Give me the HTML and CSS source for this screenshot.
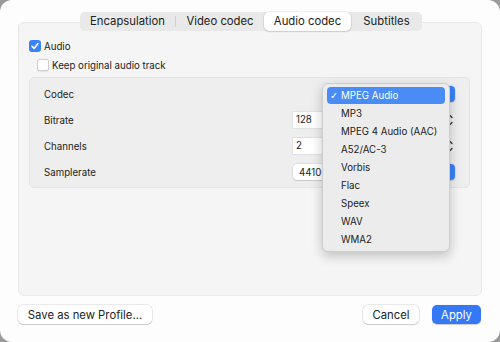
FILE: index.html
```html
<!DOCTYPE html>
<html lang="en">
<head>
  <meta charset="UTF-8" />
  <title>Convert – Audio codec</title>
  <link rel="stylesheet" href="styles.css">
</head>
<body>
  <div class="window">

    <div class="tabs">
      <div class="tab tab-enc">Encapsulation</div>
      <div class="tab-sep"></div>
      <div class="tab tab-video">Video codec</div>
      <div class="tab tab-audio active">Audio codec</div>
      <div class="tab tab-subs">Subtitles</div>
    </div>

    <div class="panel">
      <div class="check">
        <span class="box on">
          <svg width="12" height="12" viewBox="0 0 12 12"><path d="M3 6.2 L5.1 8.4 L9 3.6" fill="none" stroke="#fff" stroke-width="1.6" stroke-linecap="round" stroke-linejoin="round"/></svg>
        </span>
        Audio
      </div>
      <div class="check sub">
        <span class="box"></span>
        Keep original audio track
      </div>

      <div class="group">
        <div class="row">
          <span>Codec</span>
          <!-- the open menu sits over this popup -->
          <div class="popup popup-open">
            <span class="popup-value"></span>
            <span class="popup-arrow">
              <svg width="8" height="10" viewBox="0 0 8 10"><path d="M1.5 3.8 L4 1.5 L6.5 3.8 M1.5 6.2 L4 8.5 L6.5 6.2" fill="none" stroke="#fff" stroke-width="1.2" stroke-linecap="round" stroke-linejoin="round"/></svg>
            </span>
          </div>
        </div>
        <div class="row">
          <span>Bitrate</span>
          <div class="field-wrap">
            <div class="field">128</div>
            <span class="stepper">
              <svg width="11" height="18" viewBox="0 0 11 18"><path d="M3 6.5 L5.5 4 L8 6.5 M3 11.5 L5.5 14 L8 11.5" fill="none" stroke="#333" stroke-width="1.3" stroke-linecap="round" stroke-linejoin="round"/></svg>
            </span>
          </div>
        </div>
        <div class="row">
          <span>Channels</span>
          <div class="field-wrap">
            <div class="field">2</div>
            <span class="stepper">
              <svg width="11" height="18" viewBox="0 0 11 18"><path d="M3 6.5 L5.5 4 L8 6.5 M3 11.5 L5.5 14 L8 11.5" fill="none" stroke="#333" stroke-width="1.3" stroke-linecap="round" stroke-linejoin="round"/></svg>
            </span>
          </div>
        </div>
        <div class="row">
          <span>Samplerate</span>
          <div class="popup">
            <span class="popup-value">44100</span>
            <span class="popup-arrow">
              <svg width="8" height="10" viewBox="0 0 8 10"><path d="M1.5 3.8 L4 1.5 L6.5 3.8 M1.5 6.2 L4 8.5 L6.5 6.2" fill="none" stroke="#fff" stroke-width="1.2" stroke-linecap="round" stroke-linejoin="round"/></svg>
            </span>
          </div>
        </div>
      </div>
    </div>

    <div class="actions">
      <button class="btn btn-save">Save as new Profile...</button>
      <div class="spacer"></div>
      <button class="btn btn-cancel">Cancel</button>
      <button class="btn btn-apply">Apply</button>
    </div>

    <!-- open codec menu -->
    <ul class="menu">
      <li class="selected"><span class="tick">✓</span>MPEG Audio</li>
      <li>MP3</li>
      <li>MPEG 4 Audio (AAC)</li>
      <li>A52/AC-3</li>
      <li>Vorbis</li>
      <li>Flac</li>
      <li>Speex</li>
      <li>WAV</li>
      <li>WMA2</li>
    </ul>

  </div>
</body>
</html>
```

FILE: styles.css
```css
* {
  margin: 0;
  padding: 0;
  box-sizing: border-box;
  font-family: Inter, "Noto Sans", sans-serif;
}

body {
  background: #9a9a9a;
  color: #222;
  font-size: 9.7px;
}

.window {
  width: 500px;
  height: 342px;
  background: #fdfdfd;
  border-radius: 12px;
  display: flex;
  flex-direction: column;
  padding: 12px 18px 18px;
  position: relative;
  overflow: hidden;
}

/* === Tabs === */
.tabs {
  align-self: center;
  display: flex;
  align-items: center;
  height: 19px;
  background: #e9e9e9;
  border-radius: 5px;
  margin-bottom: -9px;
  position: relative;
  z-index: 1;
  margin-left: 2px;
}

.tab {
  height: 19px;
  line-height: 19px;
  text-align: center;
  font-size: 11.3px;
  color: #222;
}

.tab-enc { width: 95px; }
.tab-video { width: 88px; }
.tab-audio { width: 87px; }
.tab-subs { width: 71px; }

.tab-sep {
  width: 1px;
  height: 11px;
  background: #cfcfcf;
}

.tab.active {
  background: #fff;
  border-radius: 5px;
  box-shadow: 0 0 0 0.5px rgba(0,0,0,0.12), 0 1px 1.5px rgba(0,0,0,0.12);
}

/* === Panel === */
.panel {
  flex: 1;
  background: #f5f5f5;
  border: 1px solid #e9e9e9;
  border-radius: 6px;
  padding: 16px 11px 0 10px;
}

.check {
  display: flex;
  align-items: center;
  gap: 3px;
  height: 14px;
}

.check.sub {
  margin-top: 5px;
  padding-left: 8px;
}

.box {
  width: 12px;
  height: 12px;
  border-radius: 3px;
  background: #fff;
  box-shadow: inset 0 0 0 0.8px #c4c4c4, 0 0.5px 1px rgba(0,0,0,0.08);
  display: flex;
}

.box.on {
  background: #3a82f7;
  box-shadow: none;
}

.group {
  margin-top: 5px;
  background: #eeeeee;
  border: 1px solid #e3e3e3;
  border-radius: 5px;
  padding: 5px 14px 4px;
  display: flex;
  flex-direction: column;
  gap: 4px;
}

.row {
  height: 22px;
  display: flex;
  align-items: center;
  justify-content: space-between;
}

.popup {
  width: 162px;
  height: 16px;
  background: #fff;
  border-radius: 4px;
  box-shadow: 0 0 0 0.5px rgba(0,0,0,0.12), 0 1px 1px rgba(0,0,0,0.1);
  display: flex;
  align-items: center;
  justify-content: space-between;
  padding-left: 6px;
}

.popup-open {
  width: 130px;
}

.popup-arrow {
  width: 16px;
  height: 16px;
  background: #3a82f7;
  border-radius: 4px;
  display: flex;
  align-items: center;
  justify-content: center;
}

.field-wrap {
  width: 162px;
  display: flex;
  align-items: center;
  justify-content: space-between;
}

.field {
  width: 149px;
  height: 16px;
  line-height: 16px;
  background: #fff;
  padding-left: 3px;
  box-shadow: 0 0 0 0.5px rgba(0,0,0,0.1);
}

.stepper {
  width: 11px;
  height: 18px;
  display: flex;
}

/* === Buttons === */
.actions {
  margin-top: 9px;
  height: 19px;
  display: flex;
  gap: 13px;
}

.spacer {
  flex: 1;
}

.btn {
  height: 19px;
  border: none;
  border-radius: 5px;
  background: #fff;
  color: #222;
  font-size: 11.3px;
  box-shadow: 0 0 0 0.5px rgba(0,0,0,0.16), 0 1px 1px rgba(0,0,0,0.12);
}

.btn-save { width: 134px; }
.btn-cancel { width: 56px; }

.btn-apply {
  width: 49px;
  margin-right: 1px;
  background: #3478f6;
  color: #fff;
  box-shadow: 0 0.5px 1px rgba(0,0,0,0.2);
}

/* === Menu === */
.menu {
  position: absolute;
  left: 322px;
  top: 83px;
  width: 128px;
  height: 169px;
  list-style: none;
  background: #ececec;
  border: 1px solid #cdcdcd;
  border-radius: 6px;
  padding: 3px 4px;
  box-shadow: 0 4px 12px rgba(0,0,0,0.22);
  z-index: 5;
}

.menu li {
  height: 18px;
  line-height: 18px;
  padding-left: 14px;
  white-space: nowrap;
}

.menu li.selected {
  height: 17px;
  line-height: 17px;
  margin-bottom: 1px;
  padding-left: 3px;
  background: #4a8cf6;
  color: #fff;
  border-radius: 4px;
}

.tick {
  display: inline-block;
  width: 8px;
  margin-right: 3px;
  font-family: "DejaVu Sans", sans-serif;
  font-size: 9.5px;
}
```
